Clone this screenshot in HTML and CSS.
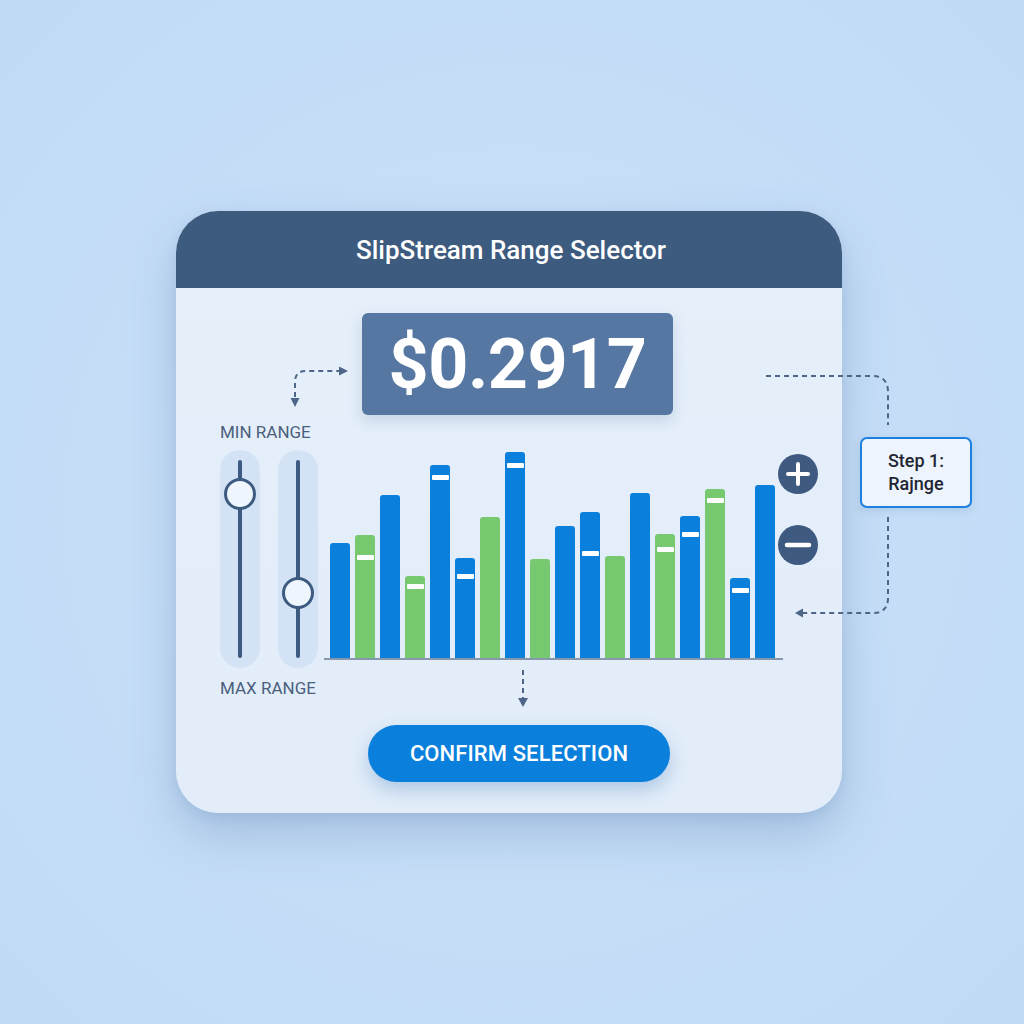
FILE: index.html
```html
<!DOCTYPE html>
<html lang="en">
<head>
<meta charset="utf-8">
<title>SlipStream Range Selector</title>
<link rel="stylesheet" href="styles.css">
</head>
<body>
<div class="page">
  <div class="card">
    <div class="card-header"><h1 class="title">SlipStream Range Selector</h1></div>
    <div class="card-body">
      <div class="price-row"><div class="price">$0.2917</div></div>
      <div class="main-row">
        <div class="sliders">
          <div class="slider-label">MIN RANGE</div>
          <div class="tracks">
            <div class="track"><div class="track-line"></div><div class="knob" style="top:28px"></div></div>
            <div class="track"><div class="track-line"></div><div class="knob" style="top:127px"></div></div>
          </div>
          <div class="slider-label max">MAX RANGE</div>
        </div>
        <div class="chart">
          <div class="bars">
            <div class="bar blue" style="height:115px"></div>
            <div class="bar green" style="height:123px"><span class="mark" style="top:20px"></span></div>
            <div class="bar blue" style="height:163px"></div>
            <div class="bar green" style="height:82px"><span class="mark" style="top:8px"></span></div>
            <div class="bar blue" style="height:193px"><span class="mark" style="top:10px"></span></div>
            <div class="bar blue" style="height:100px"><span class="mark" style="top:16px"></span></div>
            <div class="bar green" style="height:141px"></div>
            <div class="bar blue" style="height:206px"><span class="mark" style="top:11px"></span></div>
            <div class="bar green" style="height:99px"></div>
            <div class="bar blue" style="height:132px"></div>
            <div class="bar blue" style="height:146px"><span class="mark" style="top:39px"></span></div>
            <div class="bar green" style="height:102px"></div>
            <div class="bar blue" style="height:165px"></div>
            <div class="bar green" style="height:124px"><span class="mark" style="top:13px"></span></div>
            <div class="bar blue" style="height:142px"><span class="mark" style="top:16px"></span></div>
            <div class="bar green" style="height:169px"><span class="mark" style="top:9px"></span></div>
            <div class="bar blue" style="height:80px"><span class="mark" style="top:10px"></span></div>
            <div class="bar blue" style="height:173px"></div>
          </div>
          <div class="baseline"></div>
        </div>
        <div class="controls">
          <button class="round-btn" aria-label="Zoom in">
            <svg viewBox="0 0 40 40" width="40" height="40"><circle cx="20" cy="20" r="20" fill="#3e5a80"/><path d="M10 20H30M20 10V30" stroke="#ffffff" stroke-width="4" stroke-linecap="round"/></svg>
          </button>
          <button class="round-btn" aria-label="Zoom out">
            <svg viewBox="0 0 40 40" width="40" height="40"><circle cx="20" cy="20" r="20" fill="#3e5a80"/><path d="M9 20H31" stroke="#ffffff" stroke-width="4.5" stroke-linecap="round"/></svg>
          </button>
        </div>
      </div>
      <div class="action-row"><button class="confirm">CONFIRM SELECTION</button></div>
    </div>

    <svg class="connectors" viewBox="0 0 1024 1024" width="1024" height="1024">
      <g fill="none" stroke="#4d6688" stroke-width="2" stroke-dasharray="5 4">
        <path d="M295 397V382Q295 371 306 371H339"/>
        <path d="M766 376H872Q888 376 888 392V425"/>
        <path d="M888 517V598Q888 613 873 613H803"/>
        <path d="M523 670V698"/>
      </g>
      <g fill="#4d6688">
        <path d="M348 371L339 366.5V375.5Z"/>
        <path d="M295 407L290.5 398H299.5Z"/>
        <path d="M795 613L803 608.5V617.5Z"/>
        <path d="M523 707L518 698H528Z"/>
      </g>
    </svg>
    <div class="step-box">Step 1:<br>Rajnge</div>
  </div>
</div>
</body>
</html>
```

FILE: styles.css
```css
* { box-sizing: border-box; }

html, body {
  margin: 0;
  padding: 0;
}

body {
  font-family: Roboto, "Liberation Sans", Arial, sans-serif;
  background: radial-gradient(ellipse at 50% 50%, #cfe4f9 0%, #c5ddf7 60%, #c0daf6 100%);
  width: 1024px;
  height: 1024px;
  overflow: hidden;
}

.page {
  padding: 211px 0 0 176px;
  height: 1024px;
}

.card {
  position: relative;
  width: 666px;
  border-radius: 42px;
  background: linear-gradient(180deg, #e6f0fb 0%, #e3eefa 60%, #e2edf9 100%);
  box-shadow: 0 22px 50px rgba(70, 110, 160, 0.28), 0 4px 12px rgba(70, 110, 160, 0.12);
}

.card-header {
  height: 77px;
  background: #3d5a7f;
  border-radius: 42px 42px 0 0;
  display: flex;
  align-items: center;
  justify-content: center;
}

.title {
  margin: 0;
  padding-left: 4px;
  color: #ffffff;
  font-size: 26px;
  font-weight: 500;
  letter-spacing: 0;
}

.card-body {
  padding: 25px 0 31px 44px;
}

.price-row {
  display: flex;
  padding-left: 142px;
}

.price {
  width: 311px;
  height: 102px;
  border-radius: 6px;
  background: #5577a1;
  color: #ffffff;
  font-size: 70px;
  font-weight: 700;
  display: flex;
  align-items: center;
  justify-content: center;
  letter-spacing: -0.5px;
  box-shadow: 0 6px 14px rgba(60, 90, 130, 0.18);
}

.main-row {
  display: flex;
  margin-top: 8px;
}

.sliders {
  width: 98px;
  display: flex;
  flex-direction: column;
}

.slider-label {
  height: 18px;
  line-height: 18px;
  font-size: 17px;
  color: #4b5f7d;
  white-space: nowrap;
}

.tracks {
  display: flex;
  gap: 18px;
  margin-top: 9px;
}

.track {
  position: relative;
  width: 40px;
  height: 218px;
  border-radius: 20px;
  background: #d3e3f5;
  display: flex;
  justify-content: center;
  padding: 10px 0;
}

.track-line {
  width: 4px;
  height: 100%;
  border-radius: 2px;
  background: #3d5a80;
}

.knob {
  position: absolute;
  left: 4px;
  width: 32px;
  height: 32px;
  border-radius: 50%;
  background: #eef5fd;
  border: 3.5px solid #3d5a80;
}

.slider-label.max {
  margin-top: 11px;
}

.chart {
  width: 460px;
  margin-left: 7px;
  display: flex;
  flex-direction: column;
}

.bars {
  height: 235px;
  display: flex;
  align-items: flex-end;
  gap: 5px;
  padding-left: 5px;
}

.bar {
  position: relative;
  width: 20px;
  border-radius: 3px 3px 0 0;
}

.bar.blue { background: #0b7fdc; }
.bar.green { background: #77c970; }

.mark {
  position: absolute;
  left: 1.5px;
  right: 1.5px;
  height: 5px;
  background: #ffffff;
  border-radius: 1px;
}

.baseline {
  height: 2px;
  margin-left: -1px;
  margin-right: 2px;
  background: #8797ae;
}

.controls {
  display: flex;
  flex-direction: column;
  gap: 31px;
  padding-top: 31px;
  margin-left: -7px;
}

.round-btn {
  width: 40px;
  height: 40px;
  padding: 0;
  border: 0;
  background: transparent;
  display: block;
}

.round-btn svg { display: block; }

.action-row {
  display: flex;
  padding-left: 148px;
  margin-top: 28px;
}

.confirm {
  width: 302px;
  height: 57px;
  border: 0;
  border-radius: 29px;
  background: #0b7fdc;
  color: #ffffff;
  font-family: Roboto, "Liberation Sans", Arial, sans-serif;
  font-size: 22px;
  font-weight: 500;
  letter-spacing: 0.1px;
  box-shadow: 0 8px 18px rgba(20, 90, 170, 0.25);
}

.connectors {
  position: absolute;
  left: -176px;
  top: -211px;
  pointer-events: none;
  overflow: visible;
}

.step-box {
  position: absolute;
  left: 684px;
  top: 226px;
  width: 112px;
  height: 71px;
  border: 2px solid #1b80e0;
  border-radius: 7px;
  background: #edf4fc;
  color: #1f2633;
  font-size: 18px;
  font-weight: 500;
  line-height: 23px;
  text-align: center;
  padding-top: 10px;
  box-shadow: 0 3px 8px rgba(60, 100, 150, 0.15);
}
```
